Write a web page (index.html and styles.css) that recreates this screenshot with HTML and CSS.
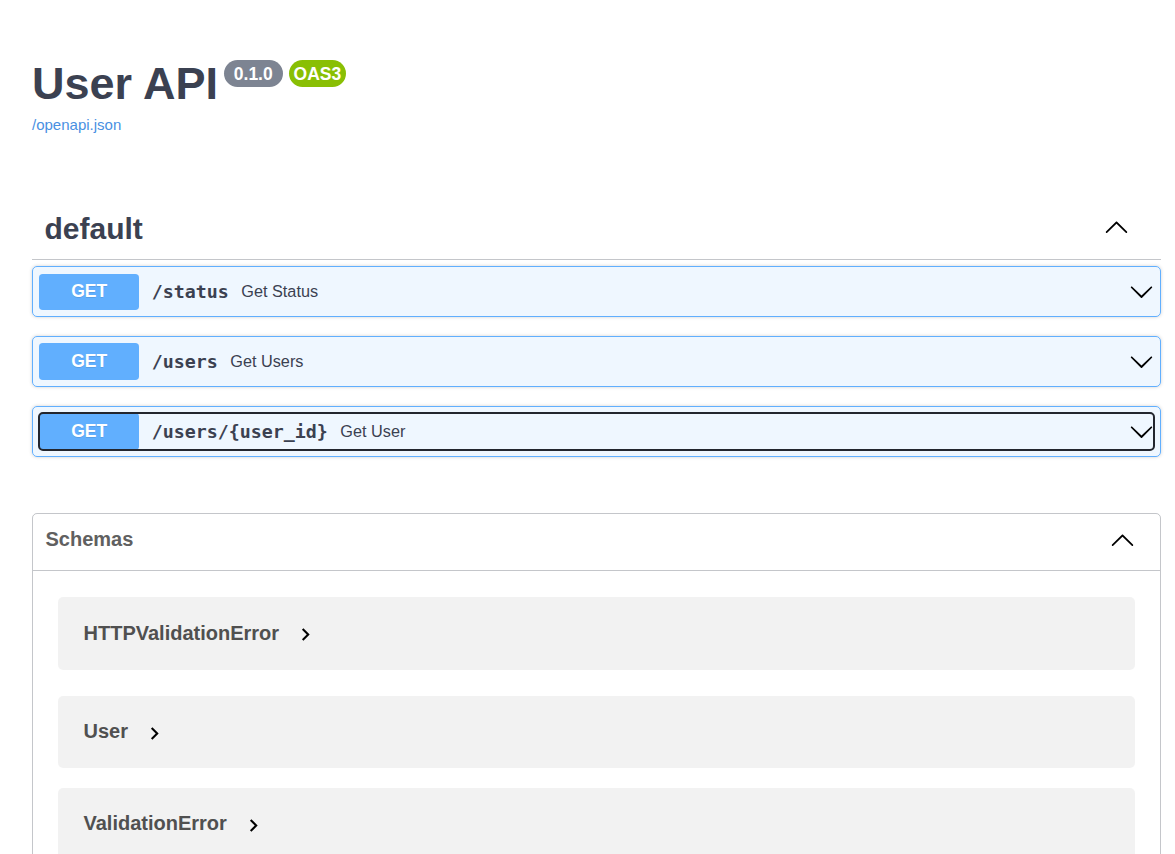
FILE: index.html
```html
<!DOCTYPE html>
<html lang="en">
<head>
<meta charset="utf-8">
<title>User API - Swagger UI</title>
<link rel="stylesheet" href="styles.css">
</head>
<body>
<div class="page">
  <header class="info">
    <h2 class="title"><span class="title-text">User API</span><span class="badge badge-version"> 0.1.0 </span><span class="badge badge-oas">OAS3</span></h2>
    <a class="spec-link" href="#">/openapi.json</a>
  </header>

  <section class="ops">
    <div class="tag">
      <h3 class="tag-name">default</h3>
      <svg class="arrow" viewBox="0 0 20 20" width="25" height="25"><path d="M17.418 14.908c.272.268.709.268.979 0s.271-.701 0-.969l-7.908-7.83c-.27-.268-.707-.268-.979 0l-7.908 7.83c-.27.268-.27.701 0 .969.271.268.709.268.979 0L10 7.767l7.418 7.141z"/></svg>
    </div>
    <div class="op-list">
      <div class="opblock">
        <div class="summary">
          <span class="method">GET</span>
          <span class="path">/status</span>
          <span class="desc">Get Status</span>
          <svg class="arrow row-arrow" viewBox="0 0 20 20" width="25" height="25"><path d="M17.418 6.109c.272-.268.709-.268.979 0s.271.701 0 .969l-7.908 7.83c-.27.268-.707.268-.979 0l-7.908-7.83c-.27-.268-.27-.701 0-.969.271-.268.709-.268.979 0L10 13.25l7.418-7.141z"/></svg>
        </div>
      </div>
      <div class="opblock">
        <div class="summary">
          <span class="method">GET</span>
          <span class="path">/users</span>
          <span class="desc">Get Users</span>
          <svg class="arrow row-arrow" viewBox="0 0 20 20" width="25" height="25"><path d="M17.418 6.109c.272-.268.709-.268.979 0s.271.701 0 .969l-7.908 7.83c-.27.268-.707.268-.979 0l-7.908-7.83c-.27-.268-.27-.701 0-.969.271-.268.709-.268.979 0L10 13.25l7.418-7.141z"/></svg>
        </div>
      </div>
      <div class="opblock">
        <div class="summary focused">
          <span class="method">GET</span>
          <span class="path">/users/{user_id}</span>
          <span class="desc">Get User</span>
          <svg class="arrow row-arrow" viewBox="0 0 20 20" width="25" height="25"><path d="M17.418 6.109c.272-.268.709-.268.979 0s.271.701 0 .969l-7.908 7.83c-.27.268-.707.268-.979 0l-7.908-7.83c-.27-.268-.27-.701 0-.969.271-.268.709-.268.979 0L10 13.25l7.418-7.141z"/></svg>
        </div>
      </div>
    </div>
  </section>

  <section class="models">
    <div class="models-head">
      <h4 class="models-title">Schemas</h4>
      <svg class="arrow" viewBox="0 0 20 20" width="25" height="25"><path d="M17.418 14.908c.272.268.709.268.979 0s.271-.701 0-.969l-7.908-7.83c-.27-.268-.707-.268-.979 0l-7.908 7.83c-.27.268-.27.701 0 .969.271.268.709.268.979 0L10 7.767l7.418 7.141z"/></svg>
    </div>
    <div class="model-list">
      <div class="model">
        <span class="model-title">HTTPValidationError</span>
        <svg class="toggle" viewBox="0 0 24 24" width="25" height="25"><path d="M10 6L8.59 7.41 13.17 12l-4.58 4.59L10 18l6-6z"/></svg>
      </div>
      <div class="model">
        <span class="model-title">User</span>
        <svg class="toggle" viewBox="0 0 24 24" width="25" height="25"><path d="M10 6L8.59 7.41 13.17 12l-4.58 4.59L10 18l6-6z"/></svg>
      </div>
      <div class="model">
        <span class="model-title">ValidationError</span>
        <svg class="toggle" viewBox="0 0 24 24" width="25" height="25"><path d="M10 6L8.59 7.41 13.17 12l-4.58 4.59L10 18l6-6z"/></svg>
      </div>
    </div>
  </section>
</div>
</body>
</html>
```

FILE: styles.css
```css
html, body {
  margin: 0;
  padding: 0;
  background: #ffffff;
}

body {
  font-family: "Liberation Sans", Arial, sans-serif;
  color: #3b4151;
}

.page {
  padding: 58px 14px 0 32px;
}

/* ---------- info ---------- */
.title {
  display: flex;
  align-items: flex-start;
  margin: 0;
  font-size: 45px;
  line-height: 52px;
  font-weight: 700;
  color: #3b4151;
}

.badge {
  margin-top: 2px;
  padding: 2.5px 5px;
  border-radius: 70px;
  font-size: 17.5px;
  line-height: 22px;
  font-weight: 700;
  color: #ffffff;
  white-space: pre;
}

.badge-version {
  margin-left: 6px;
  background: #7d8492;
}

.badge-oas {
  margin-left: 6px;
  background: #89bf04;
}

.spec-link {
  display: block;
  margin-top: 5.5px;
  font-size: 15px;
  line-height: 17px;
  color: #4990e2;
  text-decoration: none;
}

/* ---------- operations ---------- */
.ops {
  margin-top: 66.5px;
  margin-bottom: 56.25px;
}

.tag {
  display: flex;
  align-items: center;
  justify-content: space-between;
  padding: 11.5px 32.5px 13.5px 12.5px;
  border-bottom: 1px solid rgba(59, 65, 81, 0.3);
  margin-bottom: 6.25px;
}

.tag-name {
  margin: 0;
  font-size: 30px;
  line-height: 35px;
  font-weight: 700;
  color: #3b4151;
}

.tag .arrow {
  margin-bottom: 4px;
}

.arrow {
  display: block;
  flex: none;
  fill: #000000;
}

.op-list {
  display: flex;
  flex-direction: column;
  gap: 18.75px;
}

.opblock {
  border: 1px solid #61affe;
  border-radius: 5px;
  background: rgba(97, 175, 254, 0.1);
  box-shadow: 0 0 3.75px rgba(0, 0, 0, 0.19);
  padding: 6.25px;
}

.summary {
  display: flex;
  align-items: center;
  border-radius: 4px;
}

.summary.focused {
  outline: 2px solid #23262e;
  outline-offset: -1px;
}

.method {
  flex: none;
  width: 100px;
  padding: 7.5px 0;
  border-radius: 3.75px;
  background: #61affe;
  color: #ffffff;
  font-size: 17.5px;
  line-height: 21.5px;
  font-weight: 700;
  text-align: center;
  text-shadow: 0 1px 0 rgba(0, 0, 0, 0.1);
}

.path {
  padding: 0 12.5px;
  font-family: "DejaVu Sans Mono", "Liberation Mono", monospace;
  font-size: 18.3px;
  font-weight: 700;
  color: #3b4151;
}

.desc {
  flex: 1;
  font-size: 16.25px;
  color: #3b4151;
}

/* ---------- models ---------- */
.models {
  border: 1px solid rgba(59, 65, 81, 0.3);
  border-radius: 5px;
  padding-bottom: 25px;
}

.models-head {
  box-sizing: border-box;
  height: 57px;
  display: flex;
  align-items: center;
  justify-content: space-between;
  padding: 0 25px 5px 12.5px;
  border-bottom: 1px solid rgba(59, 65, 81, 0.3);
}

.models-title {
  margin: 0;
  font-size: 20px;
  font-weight: 700;
  color: #606060;
}

.model-list {
  padding-top: 26px;
}

.model {
  box-sizing: border-box;
  height: 72.5px;
  margin: 0 25px 19.5px;
  padding-left: 25.5px;
  display: flex;
  align-items: center;
  border-radius: 5px;
  background: rgba(0, 0, 0, 0.05);
}

.model:first-child {
  margin-bottom: 26px;
}

.model-title {
  font-size: 20px;
  font-weight: 700;
  color: #505050;
}

.toggle {
  display: block;
  flex: none;
  margin-left: 14px;
  margin-top: 2.5px;
  fill: #000000;
}
```
